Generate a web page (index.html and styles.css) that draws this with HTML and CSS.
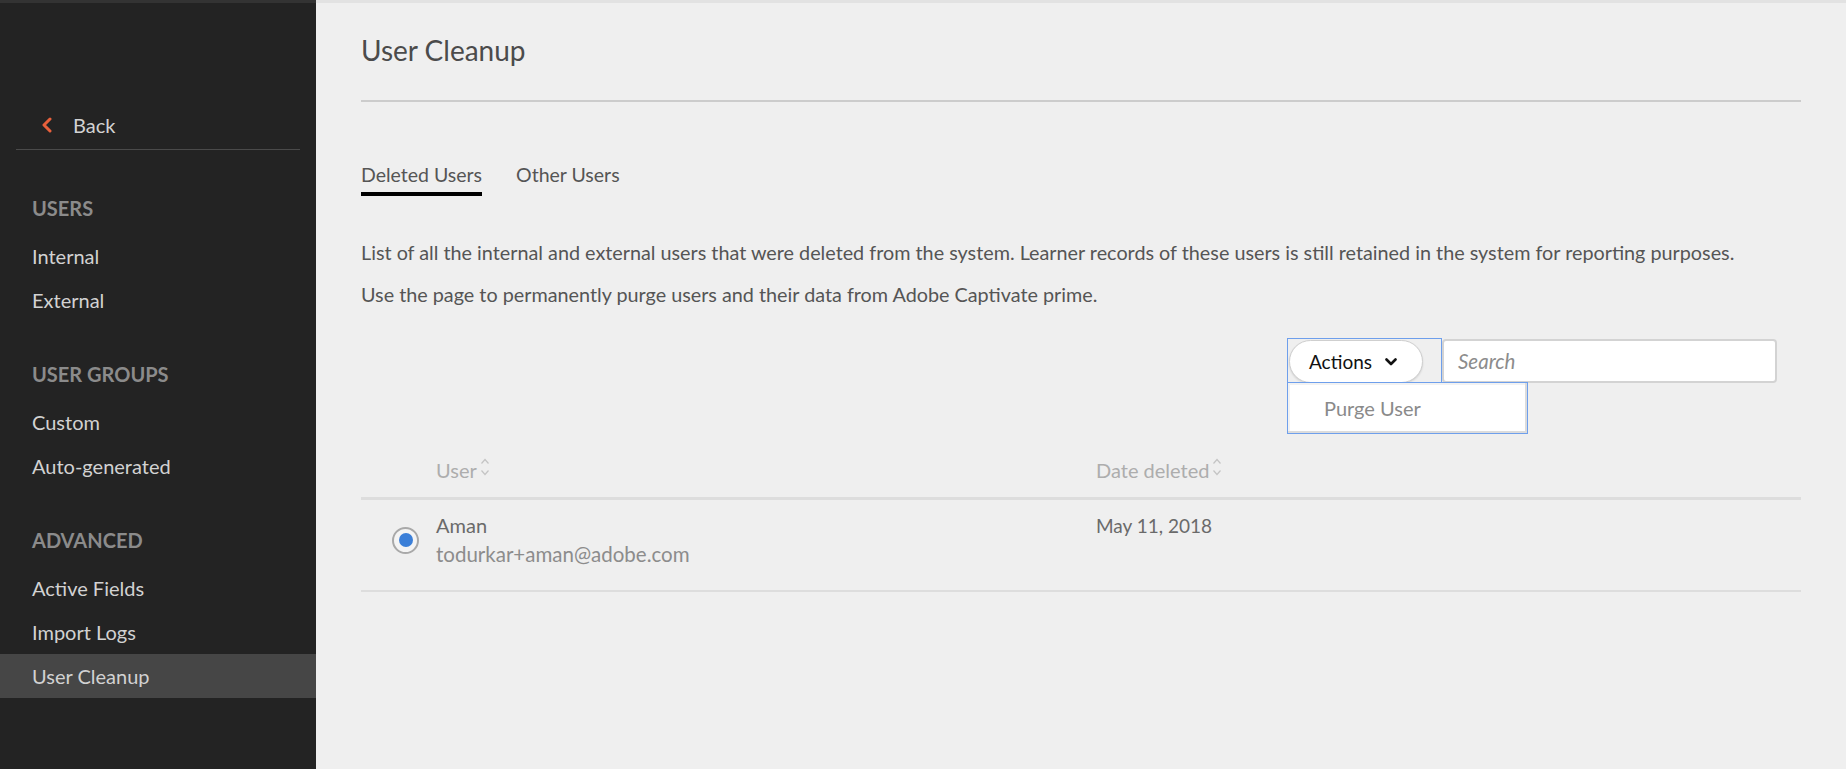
FILE: index.html
```html
<!DOCTYPE html>
<html lang="en">
<head>
<meta charset="utf-8">
<title>User Cleanup</title>
<link rel="stylesheet" href="styles.css">
</head>
<body>
<div class="app">
  <aside class="sidebar">
    <a class="back" href="#">
      <svg class="back-icon" width="12" height="16" viewBox="0 0 12 16"><path d="M9 2 L3 8 L9 14" fill="none" stroke="#e8603c" stroke-width="3" stroke-linecap="round" stroke-linejoin="round"/></svg>
      <span>Back</span>
    </a>
    <div class="section">
      <div class="sec-title">USERS</div>
      <a class="item" href="#">Internal</a>
      <a class="item" href="#">External</a>
    </div>
    <div class="section">
      <div class="sec-title">USER GROUPS</div>
      <a class="item" href="#">Custom</a>
      <a class="item" href="#">Auto-generated</a>
    </div>
    <div class="section">
      <div class="sec-title">ADVANCED</div>
      <a class="item" href="#">Active Fields</a>
      <a class="item" href="#">Import Logs</a>
      <a class="item active" href="#">User Cleanup</a>
    </div>
  </aside>

  <main class="main">
    <h1 class="title">User Cleanup</h1>
    <nav class="tabs">
      <a class="tab selected" href="#">Deleted Users</a>
      <a class="tab" href="#">Other Users</a>
    </nav>
    <p class="desc first">List of all the internal and external users that were deleted from the system. Learner records of these users is still retained in the system for reporting purposes.</p>
    <p class="desc">Use the page to permanently purge users and their data from Adobe Captivate prime.</p>

    <div class="toolbar">
      <div class="actions-wrap">
        <button class="actions">Actions
          <svg class="chev" width="12" height="8" viewBox="0 0 12 8"><path d="M1.5 1.5 L6 6 L10.5 1.5" fill="none" stroke="#111" stroke-width="2.6" stroke-linecap="round" stroke-linejoin="round"/></svg>
        </button>
        <div class="menu"><span class="menu-item">Purge User</span></div>
      </div>
      <div class="search"><span class="placeholder">Search</span></div>
    </div>

    <div class="table">
      <div class="row head">
        <div class="cell sel"></div>
        <div class="cell">User<svg class="sort" width="10" height="22" viewBox="0 0 10 22"><path d="M1.5 7.5 L5 3.5 L8.5 7.5" fill="none" stroke="#c4c4c4" stroke-width="1.2"/><path d="M1.5 14.5 L5 18.5 L8.5 14.5" fill="none" stroke="#c4c4c4" stroke-width="1.2"/></svg></div>
        <div class="cell">Date deleted<svg class="sort" width="10" height="22" viewBox="0 0 10 22"><path d="M1.5 7.5 L5 3.5 L8.5 7.5" fill="none" stroke="#c4c4c4" stroke-width="1.2"/><path d="M1.5 14.5 L5 18.5 L8.5 14.5" fill="none" stroke="#c4c4c4" stroke-width="1.2"/></svg></div>
      </div>
      <div class="row body">
        <div class="cell sel"><span class="radio"><span class="dot"></span></span></div>
        <div class="cell user">
          <div class="name">Aman</div>
          <div class="email">todurkar+aman@adobe.com</div>
        </div>
        <div class="cell date">May 11, 2018</div>
      </div>
    </div>
  </main>
</div>
</body>
</html>
```

FILE: styles.css
```css
* { box-sizing: border-box; }
html, body { margin: 0; padding: 0; }
body {
  width: 1846px;
  height: 769px;
  overflow: hidden;
  font-family: Lato, "Open Sans", sans-serif;
  background: #efefef;
}
a { text-decoration: none; color: inherit; }

.app { display: flex; height: 769px; }

/* Sidebar */
.sidebar {
  width: 316px;
  flex: none;
  background: #232323;
  border-top: 3px solid #333333;
  padding-top: 98px;
  color: #d2d2d2;
  font-size: 20px;
}
.back {
  display: flex;
  align-items: center;
  height: 49px;
  margin: 0 16px;
  padding-left: 25px;
  border-bottom: 1px solid #4a4a4a;
  color: #d2d2d2;
}
.back-icon { margin-right: 20px; }
.section { margin-top: 36px; }
.section + .section { margin-top: 30px; }
.sec-title {
  height: 44px;
  line-height: 44px;
  padding-left: 32px;
  font-weight: 700;
  color: #8b8b8b;
  margin-bottom: 4px;
}
.item {
  display: block;
  height: 44px;
  line-height: 44px;
  padding-left: 32px;
  color: #d2d2d2;
}
.item.active { background: #464646; }

/* Main */
.main {
  flex: 1;
  border-top: 3px solid #e2e2e2;
  padding: 0 45px;
  color: #555555;
}
.title {
  margin: 0;
  padding-top: 27px;
  padding-bottom: 30px;
  font-size: 28px;
  line-height: 40px;
  font-weight: 400;
  color: #4b4b4b;
  border-bottom: 2px solid #cccccc;
}
.tabs {
  display: flex;
  gap: 34px;
  margin-top: 58px;
}
.tab {
  font-size: 19.5px;
  line-height: 30px;
  padding-bottom: 2px;
  border-bottom: 4px solid transparent;
  color: #555555;
}
.tab.selected { border-bottom-color: #000000; }

.desc {
  margin: 12px 0 0;
  font-size: 19.8px;
  line-height: 30px;
  color: #555555;
}
.desc.first { margin-top: 41px; }

/* Toolbar */
.toolbar {
  display: flex;
  justify-content: flex-end;
  margin-top: 29px;
  padding-right: 24px;
}
.actions-wrap {
  position: relative;
  width: 155px;
  height: 44px;
  border: 1px solid #6e9fec;
  border-bottom: none;
}
.actions {
  display: flex;
  align-items: center;
  gap: 13px;
  width: 134px;
  height: 43px;
  margin: 1px 0 0 1px;
  padding: 0 0 0 19px;
  border: 1px solid #cfcfcf;
  border-radius: 22px;
  background: #ffffff;
  box-shadow: 0 1px 2px rgba(0,0,0,0.12);
  font-family: inherit;
  font-size: 19px;
  color: #111111;
}
.menu {
  position: absolute;
  left: -1px;
  top: 43px;
  width: 241px;
  height: 52px;
  background: #ffffff;
  border: 1px solid #6e9fec;
  box-shadow: inset -2px -2px 0 #dcdcdc, inset 2px 2px 0 #f2f2f2;
  display: flex;
  align-items: center;
  padding-left: 36px;
  z-index: 2;
}
.menu-item { font-size: 20px; color: #8a8a8a; }

.search {
  width: 335px;
  height: 44px;
  margin-top: 1px;
  background: #ffffff;
  border: 2px solid #d3d3d3;
  border-radius: 4px;
  display: flex;
  align-items: center;
  padding-left: 14px;
}
.placeholder { font-style: italic; font-size: 20.5px; color: #8c8c8c; }

/* Table */
.table { margin-top: 72px; }
.row {
  display: grid;
  grid-template-columns: 75px 660px 1fr;
}
.row.head {
  padding-bottom: 12px;
  border-bottom: 3px solid #dddddd;
  font-size: 20px;
  line-height: 30px;
  color: #adadad;
}
.row.head .cell { display: flex; align-items: center; }
.sort { margin-left: 3px; margin-top: -6px; }
.row.body {
  padding-top: 11px;
  padding-bottom: 21px;
  border-bottom: 2px solid #dddddd;
  font-size: 20px;
  line-height: 29px;
}
.cell.sel { display: flex; align-items: center; justify-content: flex-end; padding-right: 17px; }
.radio {
  width: 27px;
  height: 27px;
  border: 2.5px solid #a9a9a9;
  border-radius: 50%;
  display: flex;
  align-items: center;
  justify-content: center;
  background: #f4f4f4;
}
.dot { width: 14px; height: 14px; border-radius: 50%; background: #3b7fd8; }
.name { color: #6a6a6a; }
.email { color: #8c8c8c; font-size: 20.5px; }
.date { color: #6a6a6a; font-size: 19px; }
```
